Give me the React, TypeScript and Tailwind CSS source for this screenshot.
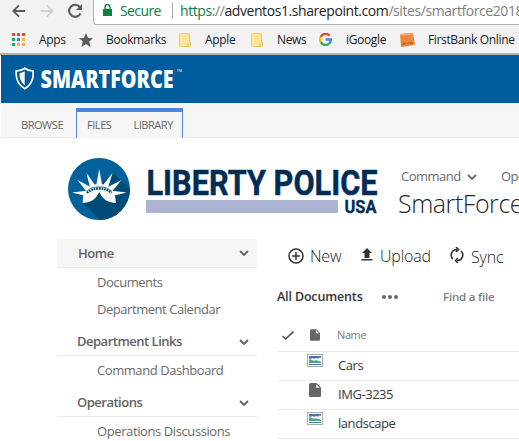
import React from "react";

function Chevron({ className = "" }: { className?: string }) {
  return (
    <svg viewBox="0 0 10 7" className={"h-[7px] w-[10px] shrink-0 " + className} fill="none" stroke="currentColor" strokeWidth="1.8">
      <path d="M1 1l4 4 4-4" />
    </svg>
  );
}

function Folder({ className = "" }: { className?: string }) {
  return (
    <svg viewBox="0 0 12 14" className={"h-[14px] w-[12px] shrink-0 " + className}>
      <path d="M.5 .5h10v9h1v4H.5z" fill="#ffe597" stroke="#efcf6b" />
      <path d="M9 13.5v-3l1.5-1" fill="none" stroke="#e8c04f" />
    </svg>
  );
}

function FileIcon({ className = "" }: { className?: string }) {
  return (
    <svg viewBox="0 0 12 14" className={"shrink-0 " + className}>
      <path d="M1.500 0H7.500L12 4.500v8q0 1.500-1.500 1.500h-9Q0 14 0 12.500v-11Q0 0 1.500 0z" fill="#666" />
      <path d="M7.200 1.200v3.600h3.600z" fill="#fff" />
    </svg>
  );
}

function PictureIcon() {
  return (
    <svg viewBox="0 0 16 13" className="h-[13px] w-4 shrink-0">
      <rect x=".5" y=".5" width="15" height="12" fill="#fff" stroke="#aaa" />
      <path d="M2 2h12v2l-2-.5-1 1.200-2-.7-2 1-1-1-2 .8-2-.3z" fill="#3f77ae" />
      <path d="M2 5.300l2 .2 1.500.8 2 .5 2-.6 4.500 1.500V9H2z" fill="#5b9d87" />
      <path d="M2 10h12v1H2z" fill="#3f77ae" />
    </svg>
  );
}

function NavHead({ label, className = "" }: { label: string; className?: string }) {
  return (
    <div className={"flex items-center justify-between border-b border-[#eaeaea] pr-2 text-[13px] font-semibold text-[#626262] " + className}>
      <span>{label}</span>
      <Chevron />
    </div>
  );
}

function FileRow({ name, picture }: { name: string; picture?: boolean }) {
  return (
    <div className="flex h-[29px] border-b border-[#eaeaea]">
      <div className="flex w-[60px] justify-center pl-[15px] pt-[2px]">
        {picture ? <PictureIcon /> : <FileIcon className="h-[14px] w-[12px]" />}
      </div>
      <span className="pl-[1px] pt-[4px] text-[13px] leading-[18px] tracking-[-0.45px] text-[#3a3a3a]">{name}</span>
    </div>
  );
}

export default function App() {
  return (
    <div className="h-[441px] w-[519px] overflow-hidden whitespace-nowrap bg-white font-['Open_Sans','Noto_Sans',sans-serif]">
      <div className="flex h-[25px] bg-[#f2f2f2]">
        <div className="flex w-[93px] shrink-0 items-start pl-3 pt-[3px] text-[#5a5a5a]">
          <svg viewBox="0 0 16 16" className="h-4 w-[14px]" fill="none" stroke="currentColor" strokeWidth="2.1"><path d="M15 8H2M8 1.5L1.5 8 8 14.5" /></svg>
          <svg viewBox="0 0 16 16" className="ml-[14px] h-4 w-[14px] text-[#d2d2d2]" fill="none" stroke="currentColor" strokeWidth="2.1"><path d="M1 8h13M8 1.5L14.5 8 8 14.5" /></svg>
          <svg viewBox="0 0 16 16" className="ml-[13px] h-4 w-4" fill="none" stroke="currentColor" strokeWidth="2.1"><path d="M13.500 10.500A6 6 0 1 1 12.800 4" /><path d="M15 1v6H9z" fill="currentColor" stroke="none" /></svg>
        </div>
        <div className="flex flex-1 rounded-bl-[3px] border-b border-l border-[#b2b2b2] bg-white pl-[9px] text-[14px] leading-[22px]">
          <svg viewBox="0 0 9 12" className="mt-[4px] h-3 w-[9px] shrink-0"><path d="M0 5h9v7H0z" fill="#0b8043" /><path d="M2 5V3a2.500 2.500 0 0 1 5 0v2" fill="none" stroke="#0b8043" strokeWidth="1.4" /></svg>
          <span className="ml-[8px] w-[52px] tracking-[-0.6px] text-[#0b8043]">Secure</span>
          <span className="mt-[3px] h-4 w-px shrink-0 bg-[#aaa]" />
          <span className="ml-[7px] tracking-[-0.42px] text-[#7d7d7d]"><span className="text-[#0b8043]">https</span>://<span className="text-[#222]">adventos1.sharepoint.com</span>/sites/smartforce2018</span>
        </div>
      </div>
      <div className="flex h-[30px] items-center border-b-2 border-[#b2b2b2] bg-[#f2f2f2] pb-px pt-[2px] text-[12px] tracking-[-0.35px] text-[#222]">
        <svg viewBox="0 0 13 13" className="ml-3 h-[13px] w-[13px] shrink-0">
          <path d="M0 0h3v3H0zM5 0h3v3H5zM10 0h3v3h-3z" fill="#f0443a" />
          <path d="M0 5h3v3H0zM0 10h3v3H0z" fill="#2ba262" /><path d="M5 5h3v3H5z" fill="#2d80ee" />
          <path d="M10 5h3v3h-3zM5 10h3v3H5zM10 10h3v3h-3z" fill="#f5b32e" />
        </svg>
        <span className="ml-[14px] w-[40px]">Apps</span>
        <svg viewBox="0 0 14 14" className="h-[14px] w-[14px] shrink-0" fill="#5a5a5a"><path d="M7 0l2.100 5 4.900.3-3.800 3.300L11.500 14 7 11l-4.500 3 1.300-5.400L0 5.300 4.900 5z" /></svg>
        <span className="ml-[13px] w-[73px]">Bookmarks</span>
        <Folder /><span className="ml-[14px] w-[46px]">Apple</span>
        <Folder /><span className="ml-[14px] w-[43px]">News</span>
        <svg viewBox="0 0 12 12" className="-ml-px h-[13px] w-[13px] shrink-0" fill="none" strokeWidth="2.2"><path d="M9.800 2.400A5 5 0 0 0 1.600 3.700" stroke="#e94235" /><path d="M1.600 3.700a5 5 0 0 0 0 4.600" stroke="#fbbc05" /><path d="M1.600 8.300a5 5 0 0 0 7.500 1.700" stroke="#34a853" /><path d="M6 6h5q0 2.600-1.900 4" stroke="#4285f4" /></svg>
        <span className="ml-[14px] w-[54px]">iGoogle</span>
        <svg viewBox="0 0 15 14" className="h-[14px] w-[15px] shrink-0"><path d="M0 1l13-1 2 12-14 2z" fill="#ec873e" /><path d="M0 1l13-1 .3 1.500L.2 2.500z" fill="#f7ad75" /><path d="M2 10l4-.5v2L2 12zM7 9.500l6-.5v1.500L7 11.200z" fill="#c96420" /></svg>
        <span className="ml-[13px]">FirstBank Online</span>
      </div>
      <div className="ml-px flex h-12 items-start bg-[#005c9c] pl-[14px] pt-[12px]">
        <svg viewBox="0 0 172 25" className="h-[25px] w-[172px]">
          <path d="M9.700 1.200Q13.500 4 18 3.800Q19.500 16 9.700 21.800Q0 16 1.300 3.800Q6 4 9.700 1.200z" fill="none" stroke="#fff" strokeWidth="1.700" />
          <path d="M9.700 4.300Q7.500 6 4.500 6.200Q4.200 14 9.700 18.200z" fill="#fff" />
          <text x="25.500" y="20.500" textLength="133" lengthAdjust="spacingAndGlyphs" fill="#fff" fontFamily="Open Sans" fontWeight="800" fontSize="24.500">SMARTFORCE</text>
          <text x="162" y="5" textLength="5" lengthAdjust="spacingAndGlyphs" fill="#fff" fontFamily="Open Sans" fontSize="4">TM</text>
        </svg>
      </div>
      <div className="ml-px flex h-[35px] items-end border-b border-[#e8e8e8] bg-[#f6f6f6] pl-5 text-[11px] tracking-[-0.45px] text-[#666]">
        <span className="w-[55px] pb-[3px] leading-[18px]">BROWSE</span>
        <div className="-mb-px flex h-[30px] w-[107px] gap-[22px] border-x border-t-4 border-[#4a86df] bg-[#f6f6f6] pl-[10px] pt-[4px] leading-[18px]"><span>FILES</span><span>LIBRARY</span></div>
      </div>
      <div className="flex h-[303px]">
        <div className="w-[277px] shrink-0">
          <div className="flex h-[101px] pl-[68px] pt-[20px]">
            <svg viewBox="0 0 62 62" className="h-[62px] w-[62px] shrink-0">
              <defs><clipPath id="disc"><circle cx="31" cy="31" r="31" /></clipPath></defs>
              <circle cx="31" cy="31" r="31" fill="#00619b" />
              <path clipPath="url(#disc)" d="M15 45L33 63H63V32L45.500 15 31 27z" fill="#004b78" />
              <g fill="#fff">
                <path d="M4 34.500l14.500-1.800-2.500 4.800zM9.500 22l13 7-4 4.500zM18.500 15l8.500 12-5 2.500zM31.200 11l3 16.500h-6zM44.500 15l-4.500 14.500-5-2.500zM53.500 22l-9.500 11.500-4-4.500zM58.500 34.500l-12 3-2.500-4.800z" />
                <path d="M17.500 33Q22 26 31.200 26T45 33Q47.500 38 48 45Q36.500 45.500 31.200 34Q26 45.500 14.700 45Q14.500 38 17.500 33z" />
              </g>
              <path d="M18.500 33.500Q23 28.800 31.200 28.800T44 33.500" fill="none" stroke="#00466f" strokeWidth=".7" />
              <path d="M19 35Q23.500 30.500 31.200 30.500T43.500 35" fill="none" stroke="#00466f" strokeWidth="2.400" strokeDasharray="1.700 .9" />
            </svg>
            <svg viewBox="0 0 234 50" className="ml-[15px] mt-[8px] h-[50px] w-[234px] shrink-0 overflow-visible">
              <text x="1.500" y="29" textLength="231" lengthAdjust="spacingAndGlyphs" fontFamily="Roboto" fontWeight="700" fontSize="35.500" fill="#002d56" stroke="#002d56" strokeWidth=".5">LIBERTY POLICE</text>
              <path d="M1 34h192v13H1z" fill="#adb3d3" />
              <text x="199.500" y="47" textLength="32" lengthAdjust="spacingAndGlyphs" fontFamily="Roboto" fontWeight="700" fontSize="18.500" fill="#002d56" stroke="#002d56" strokeWidth=".3">USA</text>
            </svg>
          </div>
          <div className="ml-[57px] w-[200px] text-[13px] text-[#6a6a6a]">
            <NavHead label="Home" className="h-[29px] bg-[#f6f6f6] pl-[21px] pt-px tracking-[-0.45px]" />
            <div className="pl-10 pt-px leading-[27px] tracking-[-0.45px]"><div>Documents</div><div>Department Calendar</div></div>
            <NavHead label="Department Links" className="mt-[4px] h-[29px] pl-5 pt-[2px] tracking-[-0.5px]" />
            <div className="pl-10 pt-px leading-[27px] tracking-[-0.43px]">Command Dashboard</div>
            <NavHead label="Operations" className="mt-[4px] h-[29px] pl-5 pt-[2px] tracking-[-0.5px]" />
            <div className="pl-10 pt-px leading-[27px] tracking-[-0.4px]">Operations Discussions</div>
          </div>
        </div>
        <div className="flex-1">
          <div className="flex h-[52px] items-center pl-[124px] pt-[26px] text-[13px] tracking-[-0.5px] text-[#6a6a6a]"><span className="w-[66px]">Command</span><Chevron className="mr-[24px]" /><span>Operations</span></div>
          <div className="h-[48px] pl-[121px] text-[25px] font-light leading-[26px] tracking-[-0.45px] text-[#262626]">SmartForce</div>
          <div className="flex h-[36px] items-center pl-[11px] text-[16px] font-light tracking-[-0.2px] text-[#222]">
            <svg viewBox="0 0 16 16" className="h-4 w-4 shrink-0" fill="none" stroke="#333" strokeWidth="1.500"><circle cx="8" cy="8" r="7" /><path d="M8 4v8M4 8h8" /></svg>
            <span className="ml-[6px] w-[51px]">New</span>
            <svg viewBox="0 0 12 13" className="-mt-[3px] h-[13px] w-3 shrink-0" fill="#333"><path d="M6 0l5 5H8.500v5h-5V5H1zM.5 11h11v1.500H.5z" /></svg>
            <span className="ml-[7px] w-[70px]">Upload</span>
            <svg viewBox="0 0 14 16" className="-mt-[2px] h-4 w-[14px] shrink-0" fill="none" stroke="#333" strokeWidth="1.600"><path d="M3 12A5.500 5.500 0 0 1 7 2.500M11 4a5.500 5.500 0 0 1-4 9.500M6 0l2.500 2.500L6 5M8 11l-2.500 2.500L8 16" /></svg>
            <span className="ml-[7px] pt-[2px]">Sync</span>
          </div>
          <div className="flex h-[45px] items-center text-[12.500px] font-semibold tracking-[-0.15px] text-[#333]"><span className="w-[105px] pt-px">All Documents</span><svg viewBox="0 0 16 4" className="h-1 w-4" fill="#666"><circle cx="2" cy="2" r="2" /><circle cx="8" cy="2" r="2" /><circle cx="14" cy="2" r="2" /></svg><span className="ml-[45px] pt-px text-[11.500px] tracking-[-0.2px] text-[#7d7d7d]">Find a file</span></div>
          <div className="flex h-[33px] items-center border-b border-[#eaeaea] text-[11px] tracking-[-0.4px] text-[#777]">
            <svg viewBox="0 0 12 9" className="ml-[5px] h-[9px] w-3 shrink-0" fill="none" stroke="#555" strokeWidth="1.600"><path d="M.6 5l3 3L11.500.500" /></svg>
            <FileIcon className="ml-[16px] h-3 w-[10px]" /><span className="ml-[17px]">Name</span>
          </div>
          <FileRow name="Cars" picture /><FileRow name="IMG-3235" /><FileRow name="landscape" picture />
        </div>
      </div>
    </div>
  );
}
